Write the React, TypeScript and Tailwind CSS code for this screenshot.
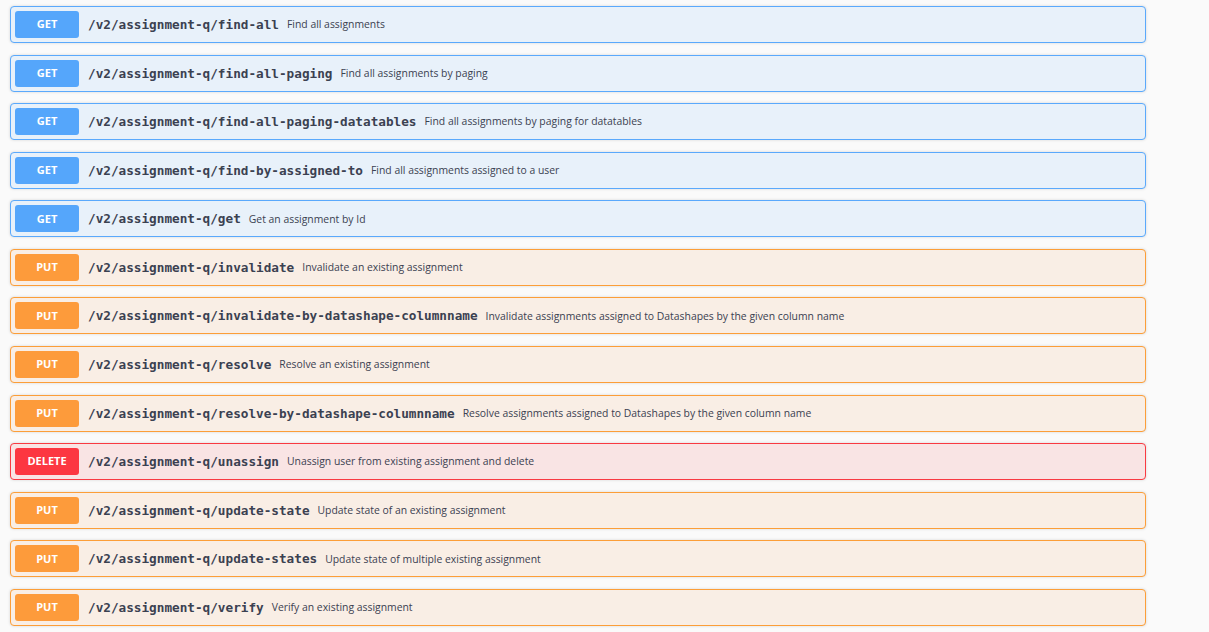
import React from "react";

type Op = { m: "GET" | "PUT" | "DELETE"; p: string; d: string };

const ops: Op[] = [
  { m: "GET", p: "/v2/assignment-q/find-all", d: "Find all assignments" },
  { m: "GET", p: "/v2/assignment-q/find-all-paging", d: "Find all assignments by paging" },
  { m: "GET", p: "/v2/assignment-q/find-all-paging-datatables", d: "Find all assignments by paging for datatables" },
  { m: "GET", p: "/v2/assignment-q/find-by-assigned-to", d: "Find all assignments assigned to a user" },
  { m: "GET", p: "/v2/assignment-q/get", d: "Get an assignment by Id" },
  { m: "PUT", p: "/v2/assignment-q/invalidate", d: "Invalidate an existing assignment" },
  { m: "PUT", p: "/v2/assignment-q/invalidate-by-datashape-columnname", d: "Invalidate assignments assigned to Datashapes by the given column name" },
  { m: "PUT", p: "/v2/assignment-q/resolve", d: "Resolve an existing assignment" },
  { m: "PUT", p: "/v2/assignment-q/resolve-by-datashape-columnname", d: "Resolve assignments assigned to Datashapes by the given column name" },
  { m: "DELETE", p: "/v2/assignment-q/unassign", d: "Unassign user from existing assignment and delete" },
  { m: "PUT", p: "/v2/assignment-q/update-state", d: "Update state of an existing assignment" },
  { m: "PUT", p: "/v2/assignment-q/update-states", d: "Update state of multiple existing assignment" },
  { m: "PUT", p: "/v2/assignment-q/verify", d: "Verify an existing assignment" },
];

const styles = {
  GET: { row: "bg-[#e8f1fa] border-[#5aa9fc]", badge: "bg-[#55a6fb]" },
  PUT: { row: "bg-[#f9eee5] border-[#fc9e38]", badge: "bg-[#fd9b3b]" },
  DELETE: { row: "bg-[#f9e4e4] border-[#f93a42]", badge: "bg-[#fc3741]" },
};

export default function App() {
  return (
    <div className="w-[1209px] h-[632px] bg-[#fafafa] overflow-hidden pt-[6px] pl-[10px]">
      <div className="flex flex-col gap-[11.58px] w-[1136px]">
        {ops.map((o, i) => (
          <div
            key={i}
            className={`h-[37px] border rounded-[4px] shadow-[0_0_3px_rgba(0,0,0,0.15)] flex items-center pl-[4px] ${styles[o.m].row}`}
          >
            <div
              className={`w-[64px] h-[27px] rounded-[3px] flex items-center justify-center text-white text-[11px] font-bold ${styles[o.m].badge}`}
              style={{ fontFamily: "'Open Sans', 'Noto Sans', sans-serif" }}
            >
              {o.m}
            </div>
            <div
              className="ml-[9px] text-[12.7px] font-bold text-[#3b4151] whitespace-nowrap"
              style={{ fontFamily: "'DejaVu Sans Mono', 'Liberation Mono', monospace" }}
            >
              {o.p}
            </div>
            <div
              className="ml-[8px] mt-[1px] text-[10.4px] text-[#3b4151] whitespace-nowrap"
              style={{ fontFamily: "'Open Sans', 'Noto Sans', sans-serif" }}
            >
              {o.d}
            </div>
          </div>
        ))}
      </div>
    </div>
  );
}
